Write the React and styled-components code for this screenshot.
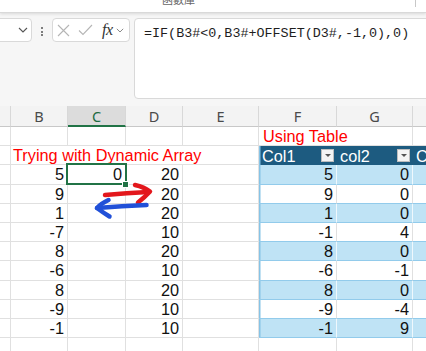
import React from "react";
import styled, { createGlobalStyle, css } from "styled-components";

const GlobalStyle = createGlobalStyle`
  html, body {
    margin: 0;
    padding: 0;
    background: #ffffff;
    overflow: hidden;
  }
  body {
    font-family: "Liberation Sans", Arial, sans-serif;
  }
`;

const Page = styled.div`
  width: 426px;
  height: 351px;
  overflow: hidden;
  background: #ffffff;
`;

const Ribbon = styled.div`
  position: relative;
  z-index: 1;
  display: flex;
  height: 12px;
  overflow: hidden;
  background: #ffffff;
  border-bottom: 1px solid #d9d9d9;
  box-shadow: 0 1px 3px rgba(0, 0, 0, 0.12);
`;

const RibbonLabel = styled.span`
  margin-left: 162px;
  margin-top: -7px;
  font: 11px/13px "Noto Sans CJK TC", sans-serif;
  color: #666666;
`;

const RibbonDivider = styled.span`
  margin-left: auto;
  margin-right: 10px;
  width: 1px;
  height: 7px;
  background: #c8c8c8;
`;

const FormulaBar = styled.div`
  display: flex;
  align-items: flex-start;
  height: 85px;
  padding-top: 5px;
  background: #f6f6f6;
`;

const NameBox = styled.div`
  box-sizing: border-box;
  display: flex;
  align-items: center;
  justify-content: flex-end;
  width: 42px;
  height: 24px;
  margin-left: -10px;
  padding-right: 3px;
  background: #ffffff;
  border: 1px solid #d9d9d9;
  border-radius: 4px;
`;

const Dots = styled.div`
  display: flex;
  flex-direction: column;
  align-items: center;
  gap: 1.5px;
  width: 20px;
  padding-top: 9px;

  span {
    width: 2px;
    height: 2px;
    border-radius: 50%;
    background: #555555;
  }
`;

const FuncBox = styled.div`
  box-sizing: border-box;
  display: flex;
  align-items: center;
  width: 78px;
  height: 24px;
  padding-left: 4px;
  background: #ffffff;
  border: 1px solid #d9d9d9;
  border-radius: 4px;
`;

const Fx = styled.span`
  margin-left: 9px;
  font: italic 16px "Liberation Serif", "DejaVu Serif", serif;
  color: #333333;
  letter-spacing: -0.5px;
`;

const FormulaBox = styled.div`
  box-sizing: border-box;
  flex: 1;
  height: 81px;
  margin-left: 4px;
  margin-right: -10px;
  padding: 6px 9px;
  background: #ffffff;
  border: 1px solid #d9d9d9;
  border-radius: 4px;
  font: 13.4px/17px "Liberation Mono", "DejaVu Sans Mono", monospace;
  color: #1e1e1e;
  white-space: nowrap;
`;

const Sheet = styled.div`
  position: relative;
  display: grid;
  grid-template-columns: 11px 57px 58px 57px 76px 78px 76px 40px;
  grid-template-rows: 21px;
  grid-auto-rows: 19.2px;
  border-top: 3px solid #f6f6f6;
`;

const ColHead = styled.div`
  box-sizing: border-box;
  display: flex;
  align-items: center;
  justify-content: center;
  background: #f3f3f3;
  border-right: 1px solid #d8d8d8;
  border-bottom: 1px solid #c8c8c8;
  font: 14.5px "Noto Sans", "Open Sans", sans-serif;
  color: #4a4a4a;

  ${(p) =>
    p.$active &&
    css`
      background: #dcdcdc;
      border-bottom: 2px solid #217346;
      color: #1e6b42;
    `}
`;

const Cell = styled.div`
  box-sizing: border-box;
  position: relative;
  display: flex;
  align-items: center;
  justify-content: ${(p) => (p.$align === "left" ? "flex-start" : "flex-end")};
  padding: 1px 3px 0 3px;
  border-right: 1px solid #e0e0e0;
  border-bottom: 1px solid #e0e0e0;
  font-size: 16.3px;
  color: #111111;
  white-space: nowrap;
  grid-column: ${(p) => (p.$span ? `span ${p.$span}` : "auto")};

  ${(p) =>
    p.$red &&
    css`
      color: #ff0000;
      padding-left: ${p.$pad || 2}px;
    `}

  ${(p) =>
    p.$band &&
    css`
      background: #bfe3f5;
      border-right-color: rgba(255, 255, 255, 0.75);
      border-bottom-color: #92cbeb;
    `}

  ${(p) =>
    p.$inTable &&
    !p.$band &&
    css`
      border-bottom-color: #92cbeb;
    `}

  ${(p) =>
    p.$edge &&
    css`
      box-shadow: inset 1.5px 0 0 #86c3e6;
    `}

  ${(p) =>
    p.$selected &&
    css`
      z-index: 2;
      &::after {
        content: "";
        position: absolute;
        left: -2px;
        top: -2px;
        right: -2px;
        bottom: -1px;
        border: 2px solid #217346;
      }
      &::before {
        content: "";
        position: absolute;
        z-index: 1;
        right: -4px;
        bottom: -4px;
        width: 5px;
        height: 5px;
        background: #217346;
        border: 1px solid #ffffff;
      }
    `}
`;

const HeadCell = styled.div`
  box-sizing: border-box;
  display: flex;
  align-items: center;
  justify-content: space-between;
  padding: 1px 3px 0 3px;
  overflow: hidden;
  background: #1d5b80;
  font-size: 16.3px;
  color: #ffffff;
  white-space: nowrap;
  box-shadow: ${(p) => (p.$edge ? "inset 1.5px 0 0 #86c3e6" : "none")};
`;

const FilterButton = styled.span`
  box-sizing: border-box;
  display: flex;
  align-items: center;
  justify-content: center;
  flex: none;
  width: 13px;
  height: 13px;
  margin-top: -1px;
  background: #f4f4f4;
  border: 1px solid #bdbdbd;

  &::after {
    content: "";
    border-left: 3px solid transparent;
    border-right: 3px solid transparent;
    border-top: 3px solid #555555;
  }
`;

const Arrows = styled.svg`
  position: absolute;
  left: 0;
  top: -3px;
  z-index: 3;
  pointer-events: none;
`;

const leftData = [
  [5, 20],
  [9, 20],
  [1, 20],
  [-7, 10],
  [8, 20],
  [-6, 10],
  [8, 20],
  [-9, 10],
  [-1, 10],
];

const tableData = [
  [5, 0],
  [9, 0],
  [1, 0],
  [-1, 4],
  [8, 0],
  [-6, -1],
  [8, 0],
  [-9, -4],
  [-1, 9],
];

const columns = ["", "B", "C", "D", "E", "F", "G", "H"];

function Chevron({ size = 10, color = "#555" }) {
  return (
    <svg width={size} height={size * 0.6} viewBox="0 0 10 6">
      <path d="M1 1 L5 5 L9 1" fill="none" stroke={color} strokeWidth="1.1" />
    </svg>
  );
}

export default function App() {
  return (
    <Page>
      <GlobalStyle />
      <Ribbon>
        <RibbonLabel>函數庫</RibbonLabel>
        <RibbonDivider />
      </Ribbon>

      <FormulaBar>
        <NameBox>
          <Chevron size={10} />
        </NameBox>
        <Dots>
          <span />
          <span />
          <span />
        </Dots>
        <FuncBox>
          <svg width="13" height="13" viewBox="0 0 13 13">
            <path d="M1 1 L12 12 M12 1 L1 12" stroke="#b5b5b5" strokeWidth="1.1" fill="none" />
          </svg>
          <svg width="15" height="12" viewBox="0 0 15 12" style={{ marginLeft: 8 }}>
            <path d="M1 6.5 L5 10.5 L14 1" stroke="#b5b5b5" strokeWidth="1.1" fill="none" />
          </svg>
          <Fx>fx</Fx>
          <span style={{ marginLeft: 3, display: "flex" }}>
            <Chevron size={8} color="#777" />
          </span>
        </FuncBox>
        <FormulaBox>=IF(B3#&lt;0,B3#+OFFSET(D3#,-1,0),0)</FormulaBox>
      </FormulaBar>

      <Sheet>
        {columns.map((c) => (
          <ColHead key={c || "a"} $active={c === "C"}>
            {c}
          </ColHead>
        ))}

        {/* row 1 */}
        <Cell />
        <Cell />
        <Cell />
        <Cell />
        <Cell />
        <Cell $red $pad={4} $span={2} $align="left">
          Using Table
        </Cell>
        <Cell />

        {/* row 2 */}
        <Cell />
        <Cell $red $span={4} $align="left">
          Trying with Dynamic Array
        </Cell>
        <HeadCell $edge>
          Col1
          <FilterButton />
        </HeadCell>
        <HeadCell>
          col2
          <FilterButton />
        </HeadCell>
        <HeadCell>Col3</HeadCell>

        {leftData.map(([b, d], i) => {
          const band = i % 2 === 0;
          const [f, g] = tableData[i];
          return (
            <React.Fragment key={i}>
              <Cell />
              <Cell>{b}</Cell>
              <Cell $selected={i === 0}>{i === 0 ? 0 : ""}</Cell>
              <Cell>{d}</Cell>
              <Cell />
              <Cell $inTable $band={band} $edge>
                {f}
              </Cell>
              <Cell $inTable $band={band}>
                {g}
              </Cell>
              <Cell $inTable $band={band} />
            </React.Fragment>
          );
        })}

        {/* row 12 */}
        {columns.map((c) => (
          <Cell key={`last-${c}`} />
        ))}

        <Arrows width="426" height="251" viewBox="0 100 426 251">
          <g fill="none" stroke="#e3171c" strokeWidth="4.5" strokeLinecap="round" strokeLinejoin="round">
            <path d="M105 192 Q127 190 148 189" />
            <path d="M135 182 Q144 184 150 188.5 Q145 194 138 199.5" />
          </g>
          <g fill="none" stroke="#2150d8" strokeWidth="4.5" strokeLinecap="round" strokeLinejoin="round">
            <path d="M146.5 202 Q122 203 97 205" />
            <path d="M108.5 197 Q101 200.5 97 205 Q103 209.5 109.5 213.5" />
          </g>
        </Arrows>
      </Sheet>
    </Page>
  );
}
